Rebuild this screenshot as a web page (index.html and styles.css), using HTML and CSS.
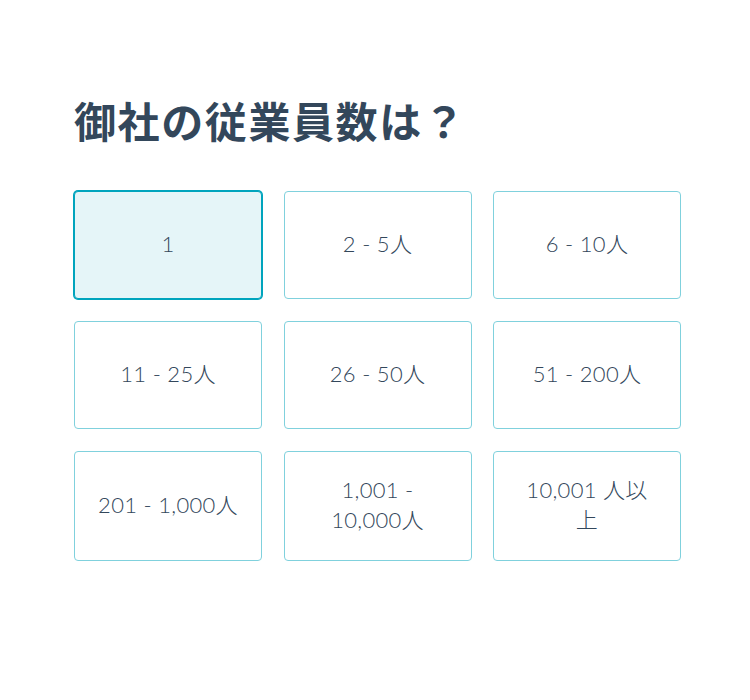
FILE: index.html
```html
<!DOCTYPE html>
<html lang="ja">
<head>
<meta charset="utf-8">
<title>御社の従業員数は？</title>
<link rel="stylesheet" href="styles.css">
</head>
<body>
<main class="page">
  <h1 class="title">御社の従業員数は？</h1>
  <div class="options">
    <button class="option is-selected"><span class="label">1</span></button>
    <button class="option"><span class="label">2 - 5人</span></button>
    <button class="option"><span class="label">6 - 10人</span></button>
    <button class="option"><span class="label">11 - 25人</span></button>
    <button class="option"><span class="label">26 - 50人</span></button>
    <button class="option"><span class="label">51 - 200人</span></button>
    <button class="option"><span class="label">201 - 1,000人</span></button>
    <button class="option"><span class="label">1,001 -<br>10,000人</span></button>
    <button class="option"><span class="label">10,001 人以<br>上</span></button>
  </div>
</main>
</body>
</html>
```
FILE: styles.css
```css
html, body {
  margin: 0;
  padding: 0;
  background: #ffffff;
}

.page {
  width: 607px;
  padding: 96px 0 0 74px;
  font-family: Lato, "Noto Sans CJK JP", sans-serif;
  color: #33475b;
}

.title {
  margin: 0 0 47px 0;
  font-family: "Noto Sans CJK JP", sans-serif;
  font-weight: 700;
  font-size: 42px;
  line-height: 48px;
  letter-spacing: 1.6px;
  color: #33475b;
}

.options {
  display: grid;
  grid-template-columns: repeat(3, 1fr);
  column-gap: 21.5px;
  row-gap: 22px;
}

.option {
  box-sizing: border-box;
  min-height: 108px;
  padding: 23px 16px 25px;
  display: flex;
  align-items: center;
  justify-content: center;
  background: #ffffff;
  border: 1px solid #80d1dd;
  border-radius: 4px;
  font-family: Lato, "Noto Sans CJK JP", sans-serif;
  font-weight: 300;
  font-size: 22px;
  line-height: 30px;
  letter-spacing: 0.3px;
  color: #33475b;
  text-align: center;
  cursor: pointer;
}

.option.is-selected {
  background: #e5f5f8;
  border-color: #00a4bd;
  box-shadow: 0 0 0 1px #00a4bd;
}

.label {
  display: block;
}
```
